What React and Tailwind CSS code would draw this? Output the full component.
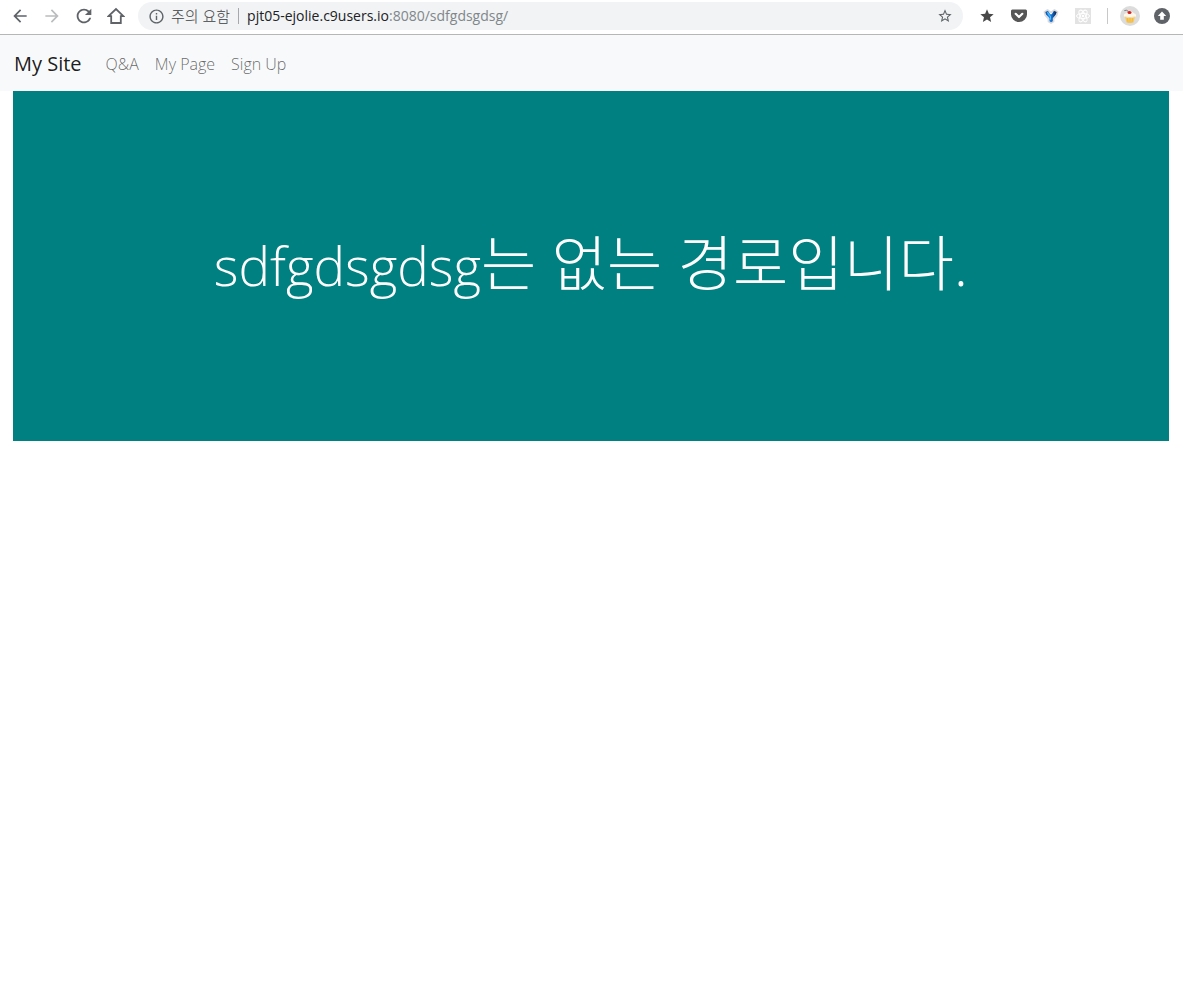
import React from "react";
import { MdArrowBack, MdArrowForward, MdRefresh, MdStarBorder, MdStar, MdInfoOutline } from "react-icons/md";

function ToolButton({ label, children }) {
  return (
    <button type="button" aria-label={label} className="flex h-8 w-8 shrink-0 items-center justify-center text-[#5f6368]">
      {children}
    </button>
  );
}

function HomeIcon() {
  return (
    <svg width="18" height="18" viewBox="0 0 18 18" fill="none" stroke="currentColor" strokeWidth="1.8">
      <path d="M1.5 9.2 9 2l7.500 7.200H13.800V16H4.200V9.200Z" />
    </svg>
  );
}

function PocketIcon() {
  return (
    <svg width="18" height="14" viewBox="0 0 18 14">
      <path d="M2.300.5h13.400A1.500 1.500 0 0 1 17 2v3.500a8 7.500 0 0 1-16 0V2A1.500 1.500 0 0 1 2.300.5Z" fill="#565656" />
      <path d="m5.700 4.800 3.300 3.200 3.300-3.200" fill="none" stroke="#fff" strokeWidth="2.200" strokeLinecap="round" strokeLinejoin="round" />
    </svg>
  );
}

function ForkIcon() {
  return (
    <svg width="16" height="16" viewBox="0 0 16 16">
      <defs>
        <linearGradient id="fork" x1="0" y1="0" x2="1" y2="0">
          <stop offset="0" stopColor="#0b3c8f" />
          <stop offset=".3" stopColor="#1f8ff0" />
          <stop offset=".6" stopColor="#1668c4" />
          <stop offset="1" stopColor="#06204f" />
        </linearGradient>
      </defs>
      <path d="M1.500 4 4.500 2 8 4.500 11.500 2l3 2-1 3.500L10.500 11v2.500L8 15l-2.500-1.500V11L2.500 7.500Z" fill="#fff" stroke="#dcdcdc" strokeWidth="1.800" strokeLinejoin="round" />
      <path d="M2.300 4 5 2.800 7.300 6.200h1.400L11 2.800 13.700 4l-1 2.800L9.800 10.300v2.900L8 14.200l-1.600-1v-2.900L3.200 6.800Z" fill="url(#fork)" />
      <path d="m4.300 4.300 3.200 4.500v3" fill="none" stroke="#4fc0ff" strokeWidth="1.100" />
    </svg>
  );
}

function AtomIcon() {
  return (
    <svg width="16" height="16" viewBox="0 0 16 16">
      <path d="M0 0h16v16H0z" fill="#e3e3e3" />
      <g fill="none" stroke="#fff" strokeWidth="1">
        <ellipse cx="8" cy="8" rx="6.500" ry="2.600" />
        <ellipse cx="8" cy="8" rx="6.500" ry="2.600" transform="rotate(60 8 8)" />
        <ellipse cx="8" cy="8" rx="6.500" ry="2.600" transform="rotate(120 8 8)" />
      </g>
      <circle cx="8" cy="8" r="1.300" fill="#fff" />
    </svg>
  );
}

function CupcakeIcon() {
  return (
    <svg width="20" height="20" viewBox="0 0 20 20">
      <circle cx="10" cy="10" r="10" fill="#dcdcdc" />
      <path d="m4.800 10.500 1.800 6q3.400 1 6.800 0l1.800-6Z" fill="#f7c95c" />
      <path d="m7.300 12 .7 4.300M10 12v4.500m2.700-4.500-.7 4.300" stroke="#e9a93a" strokeWidth=".5" />
      <path d="M4 10.200c-.5-2 1-2.800 2.300-3C7 4.800 13 4.800 13.700 7.200c1.300.2 2.800 1 2.300 3-1 1.600-2.500.8-3.200 1.300-1.300.8-2.300 0-2.800 0s-1.500.8-2.800 0C6.500 11 5 11.800 4 10.200Z" fill="#fff8e9" />
      <path d="M4.800 10.800q5.200 1.600 10.400 0" fill="none" stroke="#f0d7a4" strokeWidth=".8" />
      <path d="M8.500 5.500Q6.500 3.500 4.300 4.600" fill="none" stroke="#777" strokeWidth=".9" />
      <ellipse cx="9.500" cy="6.500" rx="2" ry="1.500" fill="#d6201f" />
    </svg>
  );
}

function UpdateIcon() {
  return (
    <svg width="16" height="16" viewBox="0 0 16 16">
      <circle cx="8" cy="8" r="8" fill="#5f6368" />
      <path d="M8 3.500 12.200 8H9.800v3.800H6.200V8H3.800Z" fill="#fff" />
    </svg>
  );
}

function BrowserBar() {
  return (
    <header className="flex h-[35px] items-start border-b border-[#b6b6b6] bg-white pl-1 pr-[5px]">
      <ToolButton label="뒤로"><MdArrowBack size={20} /></ToolButton>
      <button type="button" disabled aria-label="앞으로" className="flex h-8 w-8 shrink-0 items-center justify-center text-[#babcbe]">
        <MdArrowForward size={20} />
      </button>
      <ToolButton label="새로고침"><MdRefresh size={22} /></ToolButton>
      <ToolButton label="홈"><HomeIcon /></ToolButton>
      <div className="ml-1.5 mr-2 mt-0.5 flex h-7 min-w-0 flex-1 items-center rounded-full bg-[#f1f3f4] pl-2.5 pr-0.5 font-['Open_Sans','Noto_Sans_CJK_KR',sans-serif] text-sm">
        <MdInfoOutline size={17} className="shrink-0 text-[#5f6368]" />
        <span className="ml-1.5 whitespace-nowrap text-[15px] font-light leading-5 text-[#3c4043]">주의 요함</span>
        <span className="ml-2 h-4 w-px bg-[#a6a9ac]" />
        <a href="/sdfgdsgdsg/" className="ml-2 min-w-0 flex-1 truncate text-[#80868b]">
          <span className="text-[#202124]">pjt05-ejolie.c9users.io</span>:8080/sdfgdsgdsg/
        </a>
        <ToolButton label="북마크"><MdStarBorder size={16} /></ToolButton>
      </div>
      <ToolButton label="즐겨찾기"><MdStar size={16} className="text-[#484848]" /></ToolButton>
      <ToolButton label="Pocket"><PocketIcon /></ToolButton>
      <ToolButton label="Fork"><ForkIcon /></ToolButton>
      <ToolButton label="React"><AtomIcon /></ToolButton>
      <div className="flex h-8 w-[15px] items-center pl-2">
        <span className="h-4 w-px bg-[#c8c8c8]" />
      </div>
      <ToolButton label="프로필"><CupcakeIcon /></ToolButton>
      <ToolButton label="업데이트"><UpdateIcon /></ToolButton>
    </header>
  );
}

export default function App() {
  return (
    <div className="min-h-screen bg-white font-['Open_Sans','Noto_Sans_CJK_KR',sans-serif]">
      <BrowserBar />
      <nav className="flex h-14 items-center bg-[#f8f9fa] px-3.5 pt-0.5">
        <a href="/" className="mr-6 text-xl text-black/90">My Site</a>
        <ul className="flex gap-4 text-base font-light text-black/60">
          <li><a href="/qna">Q&amp;A</a></li>
          <li><a href="/mypage">My Page</a></li>
          <li><a href="/signup">Sign Up</a></li>
        </ul>
      </nav>
      <main className="pl-[13px] pr-3.5">
        <section className="flex h-[350px] items-center justify-center bg-[#008080] pb-1">
          <h1 className="text-center text-[60px] font-light leading-[72px] text-white">
            <span className="text-[53px]">sdfgdsgdsg</span>는 없는 경로입니다.
          </h1>
        </section>
      </main>
    </div>
  );
}
